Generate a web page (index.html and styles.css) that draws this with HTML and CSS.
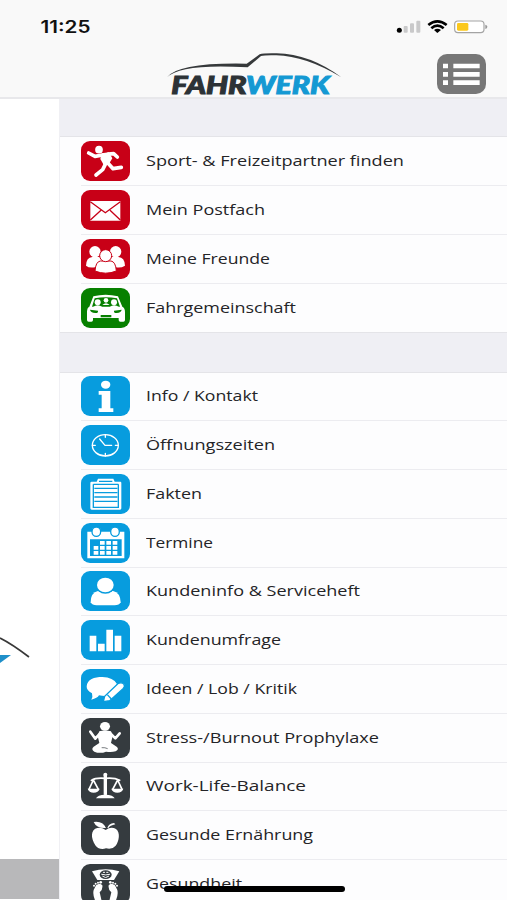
FILE: index.html
```html
<!DOCTYPE html>
<html lang="de">
<head>
<meta charset="utf-8">
<title>Fahrwerk</title>
<link rel="stylesheet" href="styles.css">
</head>
<body>
<div class="screen">
  <header class="top">
    <div class="status">
      <svg class="clock" viewBox="0 0 52 20"><text x="0.5" y="16" textLength="50" lengthAdjust="spacingAndGlyphs">11:25</text></svg>
      <svg class="signals" viewBox="0 0 276 48">
        <circle cx="10" cy="34" r="7.5"/>
        <g fill="#c9c9ca"><rect x="23" y="21" width="12" height="20" rx="3"/><rect x="42" y="13" width="12" height="28" rx="3"/><rect x="61" y="5" width="12" height="36" rx="3"/></g>
        <g fill="none" stroke="#000" stroke-width="8"><path d="M97 18Q124-4 152 18"/><path d="M106 28Q124 12 143 28"/></g>
        <path d="M114 33Q124 25 135 33L124 42Z"/>
        <rect x="176" y="6" width="88" height="35" rx="10" fill="#fff" stroke="#a4a4a4" stroke-width="3.5"/>
        <rect x="183" y="12" width="34" height="23" rx="4" fill="#fbc81c"/>
        <path d="M268 17Q274 18 274 23T268 30Z" fill="#999"/>
      </svg>
    </div>
    <div class="brandbar">
      <svg class="logo" viewBox="495 150 540 168">
        <path d="M501 232Q535 187 740 191L779 163Q791 159 830 160Q930 162 1024 232Q917 168 829 166Q795 165 783 168L743 202Q542 190 501 232Z" fill="#36393b"/>
        <text x="514" y="282" textLength="226" lengthAdjust="spacingAndGlyphs" fill="#2c3236" stroke="#2c3236">FAHR</text>
        <text x="738" y="282" textLength="251" lengthAdjust="spacingAndGlyphs" fill="#1499d3" stroke="#1499d3">WERK</text>
      </svg>
      <svg class="menubtn" viewBox="0 0 147 120"><path d="M18 29h15v14H18zM49 29h79v14H49zM18 54h15v14H18zM49 54h79v14H49zM18 79h15v14H18zM49 79h79v14H49z" fill="#fff"/></svg>
    </div>
  </header>
  <div class="body">
    <aside class="page">
      <svg class="carpiece" viewBox="0 0 59 40"><path d="M0 7Q12 13 29 26" fill="none" stroke="#383838" stroke-width="1.7"/><path d="M0 24H11L0 32Z" fill="#1f8fc9"/></svg>
      <div class="footer"></div>
    </aside>
    <nav class="menu">
      <div class="gap first"></div>
      <ul>
        <li><svg class="icon red" viewBox="0 0 147 120"><circle cx="54" cy="26" r="11.5"/><path d="M62 37L84 34L94 52L85 67L70 75L58 54Z"/><g class="line w11"><path d="M23 36L42 46L66 42"/><path d="M82 39L98 38L109 48"/><path d="M78 63L96 83L121 79"/><path d="M74 68L65 86L45 102"/></g></svg><svg class="label" viewBox="0 0 340 24"><text y="17" textLength="258" lengthAdjust="spacingAndGlyphs">Sport- &amp; Freizeitpartner finden</text></svg></li>
        <li><svg class="icon red" viewBox="0 0 147 120"><path d="M28 33H118V92H28Z"/><g class="cut" stroke-width="4"><path d="M28 35L73 68L118 35M28 90L60 61M118 90L87 61"/></g></svg><svg class="label" viewBox="0 0 340 24"><text y="17" textLength="119" lengthAdjust="spacingAndGlyphs">Mein Postfach</text></svg></li>
        <li><svg class="icon red" viewBox="0 0 147 120"><circle cx="42" cy="38" r="17"/><circle cx="104" cy="38" r="17"/><path d="M15 80Q16 55 34 54H112Q131 55 132 80Q120 88 104 85H42Q24 88 15 80Z"/><g class="cut" stroke-width="3"><path d="M42 96Q44 68 58 66H90Q104 68 106 96Q74 109 42 96Z" fill="#fff"/><circle cx="74" cy="50" r="18" fill="#fff"/></g></svg><svg class="label" viewBox="0 0 340 24"><text y="17" textLength="124" lengthAdjust="spacingAndGlyphs">Meine Freunde</text></svg></li>
        <li><svg class="icon green" viewBox="0 0 147 120"><path d="M37 25Q74 16 111 25L124 56Q132 60 132 72V96Q132 101 127 101H118Q113 101 113 96V90H36V96Q36 101 31 101H23Q18 101 18 96V72Q18 59 25 56Z"/><g fill="#078000"><path d="M41 31Q74 24 108 31L117 56H33Z"/><path d="M27 65L51 68Q52 76 43 75Q28 74 27 65ZM122 65L99 68Q98 76 107 75Q121 74 122 65ZM59 81H91V88H59Z"/></g><circle cx="50" cy="43" r="9"/><circle cx="75" cy="37" r="7"/><circle cx="99" cy="43" r="9"/><path d="M36 57Q50 46 64 57ZM64 51Q75 40 86 51ZM86 57Q99 46 114 57Z"/></svg><svg class="label" viewBox="0 0 340 24"><text y="17" textLength="150" lengthAdjust="spacingAndGlyphs">Fahrgemeinschaft</text></svg></li>
      </ul>
      <div class="gap"></div>
      <ul>
        <li><svg class="icon blue" viewBox="0 0 147 120"><ellipse cx="74" cy="26" rx="14" ry="12"/><path d="M53 45H88V97H97V108H53V97H62V56H53Z"/></svg><svg class="label" viewBox="0 0 340 24"><text y="17" textLength="112" lengthAdjust="spacingAndGlyphs">Info / Kontakt</text></svg></li>
        <li><svg class="icon blue" viewBox="0 0 147 120"><g class="line w4"><ellipse cx="73" cy="61" rx="39" ry="32"/><path d="M56 42L72 61H92M73 29V37M73 85V93M34 61H43M103 61H112"/></g></svg><svg class="label" viewBox="0 0 340 24"><text y="17" textLength="129" lengthAdjust="spacingAndGlyphs">Öffnungszeiten</text></svg></li>
        <li><svg class="icon blue" viewBox="0 0 147 120"><path d="M32 23H47L51 14H97L101 23H118Q121 23 121 27V103Q121 107 117 107H32Q28 107 28 103V27Q28 23 32 23Z"/><g class="cut" stroke-width="4"><path d="M37 31V100H112V31M37 31H112M40 43H109M40 56H109M40 69H109M40 82H109M54 22H94"/></g></svg><svg class="label" viewBox="0 0 340 24"><text y="17" textLength="56" lengthAdjust="spacingAndGlyphs">Fakten</text></svg></li>
        <li><svg class="icon blue" viewBox="0 0 147 120"><path d="M19 26H130V106H19Z"/><path class="fillcut" d="M27 49H122V99H27Z"/><path d="M57 54h14v11H57zM76 54h14v11H76zM95 54h14v11H95zM38 69h14v11H38zM57 69h14v11H57zM76 69h14v11H76zM95 69h14v11H95zM38 84h14v11H38zM57 84h14v11H57zM76 84h14v11H76zM95 84h14v11H95z"/><g class="cut" stroke-width="4"><ellipse cx="46" cy="26" rx="13" ry="14" fill="#fff"/><ellipse cx="102" cy="26" rx="13" ry="14" fill="#fff"/></g></svg><svg class="label" viewBox="0 0 340 24"><text y="17" textLength="67" lengthAdjust="spacingAndGlyphs">Termine</text></svg></li>
        <li><svg class="icon blue" viewBox="0 0 147 120"><path d="M29 94Q29 65 51 60H96Q118 65 119 94Q115 103 101 103H47Q33 103 29 94Z"/><ellipse class="fillcut" cx="73" cy="42" rx="29" ry="26"/><ellipse cx="73" cy="42" rx="25" ry="22"/></svg><svg class="label" viewBox="0 0 340 24"><text y="17" textLength="214" lengthAdjust="spacingAndGlyphs">Kundeninfo &amp; Serviceheft</text></svg></li>
        <li><svg class="icon blue" viewBox="0 0 147 120"><path d="M26 47H46V94H26ZM51 71H71V94H51ZM76 29H96V94H76ZM101 47H121V94H101Z"/></svg><svg class="label" viewBox="0 0 340 24"><text y="17" textLength="135" lengthAdjust="spacingAndGlyphs">Kundenumfrage</text></svg></li>
        <li><svg class="icon blue" viewBox="0 0 147 120"><path d="M33 73Q16 64 17 52C18 31 40 24 64 24Q97 25 108 45L84 80Q70 82 54 79Q49 88 31 92Q36 84 33 73Z"/><g class="cut" stroke-width="4"><path d="M67 98L71 82L112 43Q123 39 129 46Q133 52 126 59L86 95Z" fill="#fff"/><path d="M79 77L91 90"/></g></svg><svg class="label" viewBox="0 0 340 24"><text y="17" textLength="151" lengthAdjust="spacingAndGlyphs">Ideen / Lob / Kritik</text></svg></li>
        <li><svg class="icon dark" viewBox="0 0 147 120"><ellipse cx="72" cy="25" rx="15" ry="13"/><path d="M55 40Q72 35 90 40L95 55L89 78H56L50 55Z"/><g class="line w7"><path d="M59 44L43 62L28 41M86 44L103 61L116 46"/></g><path d="M56 74Q73 82 89 74L108 87Q115 94 104 100Q91 104 75 101Q57 108 40 101Q29 94 38 86Z"/><path class="cut" stroke-width="2" d="M62 89Q72 88 80 92"/></svg><svg class="label" viewBox="0 0 340 24"><text y="17" textLength="233" lengthAdjust="spacingAndGlyphs">Stress-/Burnout Prophylaxe</text></svg></li>
        <li><svg class="icon dark" viewBox="0 0 147 120"><circle cx="73" cy="26" r="6"/><path d="M68 27H78V86H68ZM45 97Q49 87 73 86Q97 87 101 97Z"/><g class="line w5"><path d="M31 43Q45 34 73 37Q100 34 116 43M37 42L24 70M37 42L52 70M110 42L95 70M110 42L123 70"/></g><path d="M20 68H56Q52 80 38 80T20 68ZM91 68H127Q123 80 109 80T91 68Z"/></svg><svg class="label" viewBox="0 0 340 24"><text y="17" textLength="160" lengthAdjust="spacingAndGlyphs">Work-Life-Balance</text></svg></li>
        <li><svg class="icon dark" viewBox="0 0 147 120"><path d="M74 45Q90 33 105 42C119 52 114 80 104 92Q93 105 75 100Q56 106 44 92C28 69 29 43 49 39Q61 36 74 45Z"/><path d="M38 21Q65 17 75 39Q47 41 38 21Z"/><path d="M79 39Q83 25 99 24L103 28Q87 32 82 39Z"/></svg><svg class="label" viewBox="0 0 340 24"><text y="17" textLength="167" lengthAdjust="spacingAndGlyphs">Gesunde Ernährung</text></svg></li>
        <li><svg class="icon dark" viewBox="0 0 147 120"><path d="M33 22Q74 10 115 22L99 48H49Z"/><ellipse class="fillcut" cx="74" cy="32" rx="18" ry="13"/><g class="line w3"><path d="M62 31Q74 35 86 31M65 37Q74 45 83 37M67 25H71M77 25H81"/></g><path d="M45 64Q57 54 64 64Q66 77 56 85L63 115H45Q34 94 38 78ZM102 64Q90 54 83 64Q81 77 91 85L84 115H102Q113 94 109 78Z"/><circle cx="39" cy="65" r="3"/><circle cx="44" cy="59" r="3"/><circle cx="51" cy="56" r="3"/><circle cx="59" cy="55" r="4"/><circle cx="108" cy="65" r="3"/><circle cx="103" cy="59" r="3"/><circle cx="96" cy="56" r="3"/><circle cx="88" cy="55" r="4"/></svg><svg class="label" viewBox="0 0 340 24"><text y="17" textLength="96" lengthAdjust="spacingAndGlyphs">Gesundheit</text></svg></li>
      </ul>
    </nav>
  </div>
  <div class="home"></div>
</div>
</body>
</html>
```
FILE: styles.css
```css
* { box-sizing: border-box; }
body { margin: 0; background: #fff; overflow: hidden; }
svg { display: block; flex: none; }
.screen { position: relative; width: 507px; height: 900px; overflow: hidden; display: flex; flex-direction: column; }
.top { height: 99px; flex: none; background: #f9f9f9; border-bottom: 2px solid #e8e8eb; }
.status { height: 54px; padding: 17px 19px 0 40px; display: flex; justify-content: space-between; }
.clock { width: 52px; height: 20px; font: 600 17px Inter, sans-serif; fill: #111; }
.signals { width: 92px; height: 16px; margin-top: 2px; }
.brandbar { display: flex; justify-content: space-between; padding: 0 21px 0 165px; }
.logo { width: 180px; height: 56px; margin-top: -4px; font: italic 900 71px Lato, sans-serif; stroke-width: 3; overflow: visible; }
.menubtn { width: 49px; height: 40px; border-radius: 10px; background: #777; }
.body { display: flex; height: 801px; }
.page { width: 59px; display: flex; flex-direction: column; background: #fff; }
.carpiece { width: 59px; height: 40px; margin-top: 532px; }
.footer { height: 40px; margin-top: 188px; background: #b8b8ba; }
.menu { flex: 1; border-left: 1px solid #f0f0f4; background: #fdfdfe; }
.gap { height: 40.2px; background: #efeff4; border-top: 1px solid #e4e4e8; border-bottom: 1px solid #e4e4e8; }
.gap.first { height: 38.4px; border-top: 0; }
ul { list-style: none; margin: 0; padding: 0 0 0 21px; }
li { height: 48.75px; display: flex; align-items: center; gap: 16px; border-bottom: 1px solid #ececf0; }
li:last-child { border-bottom-color: transparent; }
.icon { width: 49px; height: 40px; border-radius: 9px; fill: #fff; }
.red { --bg: #c80017; }
.green { --bg: #078000; }
.blue { --bg: #079cde; }
.dark { --bg: #353b3f; }
.icon { background: var(--bg); }
.line { fill: none; stroke: #fff; stroke-linecap: round; stroke-linejoin: round; }
.w11 { stroke-width: 11; }
.w7 { stroke-width: 8; }
.w5 { stroke-width: 5; }
.w4 { stroke-width: 4; }
.w3 { stroke-width: 3; }
.cut { fill: none; stroke: var(--bg); }
.fillcut { fill: var(--bg); }
.label { width: 340px; height: 24px; font: 400 15.3px "Open Sans", sans-serif; fill: #242427; }
.home { position: absolute; left: 164px; top: 886px; width: 181px; height: 5.5px; border-radius: 3px; background: #000; }
```
